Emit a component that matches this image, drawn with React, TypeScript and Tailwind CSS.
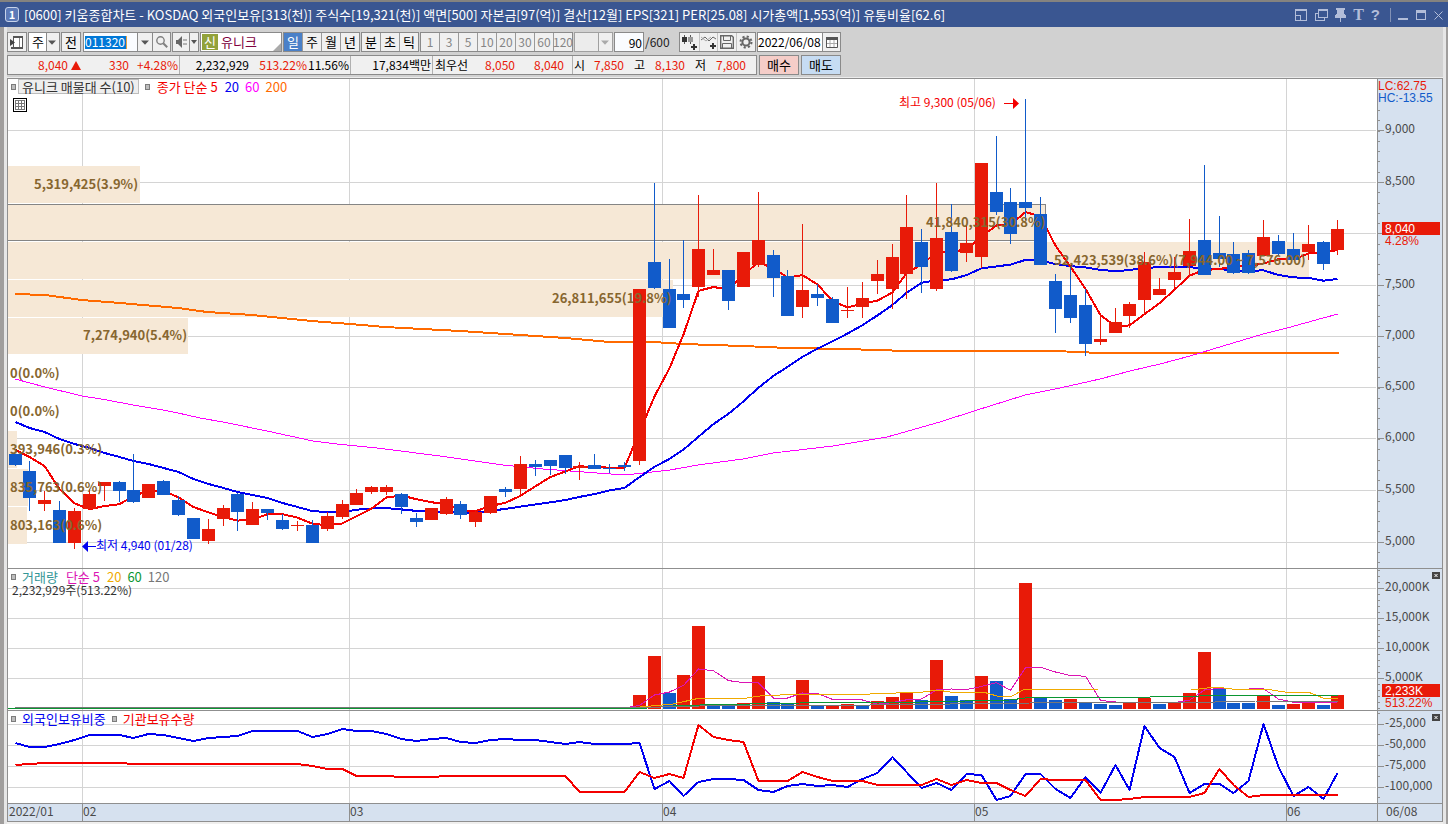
import type { ReactNode } from 'react';

type Candle = [top: number, bottom: number, high: number, low: number, up: 0 | 1];

const RED = '#e81a08';
const BLUE = '#115bca';
const GRID = '#d4d4d4';
const FRAME = '#8f8f8f';
const AXIS_BG = '#d6e1ef';
const BAND = '#f6e8d6';
const BROWN = '#87662f';

const KR = "font-['Noto_Sans_CJK_KR',sans-serif]";
const AXIS_NOTE = "font-['Liberation_Sans',sans-serif]";

/* top, bottom, high, low (drawing units), rising flag */
const candles: Candle[] = [
  [454, 465, 454, 466, 0], [471, 498, 461, 511, 0], [500, 504, 491, 511, 1], [510, 543, 501, 543, 0],
  [511, 543, 508, 549, 1], [494, 509, 489, 509, 1], [482, 486, 482, 501, 1], [482, 491, 481, 502, 0],
  [490, 502, 454, 503, 0], [484, 498, 484, 498, 1], [481, 495, 480, 495, 0], [500, 515, 496, 516, 0],
  [518, 539, 518, 539, 0], [529, 541, 519, 544, 1], [508, 519, 505, 526, 1], [494, 512, 493, 531, 0],
  [509, 525, 502, 525, 1], [509, 513, 509, 520, 0], [520, 529, 514, 530, 0], [525, 526, 521, 531, 1],
  [525, 543, 520, 543, 0], [516, 529, 512, 531, 1], [504, 517, 500, 519, 1], [493, 505, 489, 505, 1],
  [487, 492, 486, 494, 1], [487, 492, 485, 495, 1], [494, 507, 493, 514, 0], [518, 522, 513, 527, 0],
  [508, 520, 508, 520, 1], [499, 514, 497, 515, 1], [504, 515, 501, 519, 0], [512, 522, 510, 527, 1],
  [496, 513, 496, 514, 1], [489, 492, 487, 497, 0], [464, 489, 456, 495, 1], [464, 467, 460, 476, 0],
  [460, 466, 460, 475, 0], [455, 468, 455, 474, 0], [466, 468, 462, 480, 1], [465, 469, 454, 469, 0],
  [468, 469, 464, 473, 0], [465, 467, 462, 471, 0], [289, 461, 289, 465, 1], [262, 288, 183, 289, 0],
  [289, 328, 259, 328, 0], [294, 300, 240, 308, 0], [249, 287, 195, 297, 1], [270, 275, 249, 275, 1],
  [270, 301, 270, 310, 0], [252, 287, 252, 287, 1], [240, 265, 192, 267, 1], [255, 278, 250, 297, 0],
  [276, 316, 270, 316, 0], [290, 307, 224, 318, 1], [294, 298, 284, 306, 0], [299, 323, 297, 323, 0],
  [310, 311, 287, 318, 1], [298, 307, 282, 318, 1], [274, 281, 260, 294, 1], [257, 289, 244, 309, 1],
  [227, 274, 195, 299, 1], [242, 267, 229, 293, 0], [238, 289, 183, 291, 1], [232, 271, 204, 272, 0],
  [243, 253, 225, 262, 1], [163, 257, 163, 268, 1], [192, 212, 136, 215, 0], [202, 234, 188, 244, 0],
  [202, 208, 99, 220, 0], [214, 265, 197, 265, 0], [281, 309, 274, 333, 0], [295, 318, 266, 323, 0],
  [305, 344, 289, 356, 0], [339, 342, 315, 345, 1], [322, 333, 308, 333, 1], [304, 316, 302, 328, 1],
  [262, 300, 252, 314, 1], [289, 295, 278, 295, 1], [272, 280, 257, 288, 1], [251, 266, 219, 277, 1],
  [240, 275, 165, 275, 0], [253, 259, 216, 267, 0], [254, 273, 242, 274, 0], [253, 273, 250, 274, 0],
  [237, 256, 220, 256, 1], [241, 254, 235, 256, 0], [249, 260, 233, 260, 0], [244, 252, 225, 260, 1],
  [242, 264, 241, 270, 0], [229, 250, 220, 255, 1],
];

/* top edge and direction of each volume bar from the 43rd session on */
const volumeFirst = 42;
const volumeTops = [
  695, 656, 693, 675, 626, 704, 705, 703, 676, 702, 704, 680, 705, 706, 704, 705, 701, 697, 692, 700,
  660, 696, 700, 676, 681, 699, 583, 697, 700, 699, 702, 704, 705, 703, 698, 704, 703, 693, 652, 689,
  703, 703, 696, 705, 704, 703, 705, 695,
];
const volumeRising = [
  1, 1, 0, 1, 1, 0, 0, 1, 1, 0, 0, 1, 0, 1, 1, 0, 1, 1, 1, 0, 1, 0, 0, 1,
  0, 0, 1, 0, 0, 1, 0, 0, 0, 1, 1, 0, 1, 1, 1, 0, 0, 0, 1, 0, 1, 1, 0, 1,
];

const foreign = [
  743, 747, 747, 744, 740, 735, 735, 735, 738, 734, 735, 738, 741, 738, 737, 736, 731, 731, 731, 731,
  737, 734, 729, 731, 731, 734, 739, 741, 739, 738, 742, 743, 740, 739, 740, 740, 742, 744, 742, 744,
  744, 744, 743, 789, 781, 796, 782, 779, 779, 780, 790, 792, 786, 784, 786, 785, 787, 779, 773, 757,
  772, 788, 783, 790, 774, 775, 800, 796, 774, 774, 789, 798, 777, 793, 765, 790, 726, 748, 757, 793,
  784, 784, 793, 781, 724, 767, 796, 787, 799, 773,
];
const institution = [
  765, 764, 763, 763, 763, 763, 763, 763, 764, 764, 764, 764, 764, 764, 764, 764, 764, 764, 764, 764,
  766, 769, 769, 776, 776, 776, 777, 777, 777, 776, 776, 776, 776, 776, 776, 776, 776, 776, 792, 792,
  792, 792, 772, 778, 774, 778, 725, 737, 740, 742, 781, 781, 781, 772, 777, 781, 781, 781, 785, 785,
  785, 785, 779, 785, 780, 783, 783, 790, 796, 779, 780, 780, 780, 800, 800, 799, 797, 797, 797, 797,
  793, 769, 785, 797, 795, 795, 795, 795, 795, 795,
];

const xAt = (i: number) => Math.floor(15 + 14.865 * i);
const closes = candles.map(([top, bottom, , , up]) => (up ? top : bottom));
const mean = (list: number[]) => list.reduce((a, b) => a + b, 0) / list.length;
const moving = (list: number[], n: number, seed: number[]) =>
  list.map((_, i) => (i < seed.length ? seed[i] : mean(list.slice(Math.max(0, i - n + 1), i + 1))));
const toPoints = (ys: number[], from = 0) => ys.map((y, i) => `${xAt(i + from) + 0.5},${y.toFixed(1)}`).join(' ');

const ma5 = moving(closes, 5, [450, 457, 466, 489]);
const ma20 = moving(closes, 20, [
  422, 428, 432, 439, 444, 448, 453, 457, 461, 464, 468, 472, 479, 484, 488, 492, 495, 498, 503, 507,
]);
const volumeAll = candles.map((_, i) => (i < volumeFirst ? 708 : volumeTops[i - volumeFirst]));
const vol5 = moving(volumeAll, 5, []);

const ma60 =
  '15,379 45,387 82,396 107,400 133,405 163,410 178,413 200,418 223,422 267,431 313,441 337,444 377,448 440,456 503,465 543,469 597,473 625,475 670,470 698,465 743,459 773,453 833,446 887,437 940,422 974,411 1025,395 1060,388 1100,379 1130,371 1160,364 1190,356 1233,343 1263,334 1287,328 1323,318 1338,314';
const ma200 =
  '15,294 45,295 82,300 120,303 178,308 207,312 252,315 312,321 350,324 385,327 460,331 520,335 565,338 610,342 653,342 683,344 743,346 788,348 845,349 907,351 1055,351 1100,353 1339,353';

const months: [number, string][] = [[82, '02'], [349, '03'], [662, '04'], [974, '05'], [1286, '06']];

const profile: [number, number, number][] = [
  [166, 37, 140], [204, 37, 1045], [242, 37, 1309], [280, 37, 673], [318, 36, 188],
  [431, 37, 17], [469, 37, 28], [507, 37, 27],
];
const profileLabels: [number, number, string][] = [
  [34, 189, '5,319,425(3.9%)'], [926, 227, '41,840,315(30.8%)'],
  [1054, 265, '52,423,539(38.6%)(7,944.00 ~ 7,576.00)'], [552, 303, '26,811,655(19.8%)'],
  [83, 340, '7,274,940(5.4%)'], [10, 378, '0(0.0%)'], [10, 416, '0(0.0%)'],
  [10, 454, '393,946(0.3%)'], [10, 492, '835,763(0.6%)'], [10, 530, '803,163(0.6%)'],
];

const priceTicks: [number, string][] = [
  [130, '9,000'], [182, '8,500'], [233, ''], [285, '7,500'], [336, '7,000'], [387, '6,500'],
  [438, '6,000'], [490, '5,500'], [542, '5,000'],
];
const volumeTicks: [number, string][] = [[588, '20,000K'], [618, '15,000K'], [648, '10,000K'], [678, '5,000K']];
const holdTicks: [number, string][] = [[724, '-25,000'], [745, '-50,000'], [766, '-75,000'], [787, '-100,000']];

function every(from: number, to: number, step: number) {
  const out: number[] = [];
  for (let y = from; y < to; y += step) out.push(Math.round(y));
  return out;
}

function Panel({ top, height, ticks, minor, label, notes, children }: {
  top: number; height: number; ticks: [number, string][]; minor: number[]; label: string; notes?: ReactNode; children: ReactNode;
}) {
  return (
    <svg viewBox={`7 ${top} 1436 ${height}`} className={`block h-auto w-full text-[12px] ${KR}`} role="img" aria-label={label}>
      <g shapeRendering="crispEdges">
        <rect x="7" y={top} width="1436" height={height} fill="#fff" />
        {ticks.map(([y]) => <rect key={y} x="8" y={y} width="1368" height="1" fill={GRID} />)}
        {months.map(([x]) => <rect key={x} x={x} y={top} width="1" height={height} fill={GRID} />)}
      </g>
      {children}
      <g shapeRendering="crispEdges">
        <rect x="1377" y={top} width="65" height={height} fill={AXIS_BG} />
        {minor.map((y) => <rect key={y} x="1378" y={y} width="2" height="1" fill={FRAME} />)}
        {ticks.map(([y]) => <rect key={y} x="1378" y={y} width="6" height="1" fill={FRAME} />)}
        <rect x="7" y={top} width="1436" height="1" fill={FRAME} />
        <rect x="7" y={top} width="1" height={height} fill={FRAME} />
        <rect x="1377" y={top} width="1" height={height} fill={FRAME} />
        <rect x="1442" y={top} width="1" height={height} fill={FRAME} />
      </g>
      {ticks.map(([y, t]) => t && <text key={y} x="1385" y={y + 3} fill="#4a4a4a">{t}</text>)}
      {notes}
    </svg>
  );
}

function Tag({ y, value, percent }: { y: number; value: string; percent: string }) {
  return (
    <g className={AXIS_NOTE}>
      <rect x="1382" y={y} width="58" height="13" fill={RED} shapeRendering="crispEdges" />
      <text x="1385" y={y + 11} fill="#fff">{value}</text>
      <text x="1385" y={y + 23} fill={RED}>{percent}</text>
    </g>
  );
}

const Dot = () => <span className="h-[6px] w-[5px] border border-[#7c7c7c] bg-[#bdbdbd]" />;

function Close({ label }: { label: string }) {
  return (
    <button aria-label={label} className="absolute right-[3px] top-1 flex h-[7px] w-2 items-center justify-center bg-[#444]">
      <svg viewBox="0 0 8 7" className="h-[7px] w-2"><path d="M2.5 2l3 3M5.5 2l-3 3" stroke="#fff" strokeWidth="1" /></svg>
    </button>
  );
}

const Caret = ({ dim = false }: { dim?: boolean }) => (
  <svg viewBox="0 0 8 5" className="h-[5px] w-2"><path d="M0 .5h8L4 4.8z" fill={dim ? '#aaa' : '#555'} /></svg>
);

const box = 'flex h-5 items-center justify-center border border-[#8a8a8a]';

function Group({ items, active, dim, label }: { items: string[]; active?: string; dim?: boolean; label: string }) {
  return (
    <div role="group" aria-label={label} className={`flex h-5 border border-[#8a8a8a] ${dim ? '' : 'text-[13px]'}`}>
      {items.map((t, i) => (
        <button
          key={t}
          className={`flex h-full items-center justify-center whitespace-nowrap ${i ? 'w-[19px] border-l border-[#9a9a9a]' : 'w-[18px]'} ${t === active ? 'bg-[#4a80c8] text-white' : 'bg-[#f0f0f0]'} ${dim ? 'text-[#858585]' : ''}`}
        >
          {t}
        </button>
      ))}
    </div>
  );
}

function TitleBar() {
  return (
    <header className="flex h-[27px] items-center border-t-2 border-[#85837f] bg-[#3a5691] pl-[5px] pr-[5px] text-white">
      <span className="flex h-[15px] w-[14px] items-center justify-center rounded-[3px] border border-[#c7d3ea] bg-[#5c7ab8] text-[11px] font-bold leading-none">1</span>
      <h1 className="min-w-0 flex-1 truncate pl-[5px] text-[13px] font-normal">
        [0600] 키움종합차트 - KOSDAQ 외국인보유[313(천)] 주식수[19,321(천)] 액면[500] 자본금[97(억)] 결산[12월] EPS[321] PER[25.08] 시가총액[1,553(억)] 유통비율[62.6]
      </h1>
      <div className="flex items-center text-[#b2bdd9]">
        <button aria-label="화면 축소" className="mr-2"><svg viewBox="0 0 12 12" className="h-3 w-3" fill="none" stroke="currentColor" shapeRendering="crispEdges"><path d="M.5 1v10.500h11V1M1 6.500h4.500v5" /><path d="M0 1h12" strokeWidth="2" /></svg></button>
        <button aria-label="창 복제" className="mr-[7px]"><svg viewBox="0 0 13 12" className="h-3 w-[13px]" fill="none" stroke="currentColor" shapeRendering="crispEdges"><path d="M3.500 1.500h9v7h-9zM3 4.500H.5v7h9V9" /><path d="M3 1h10" strokeWidth="2" /></svg></button>
        <button aria-label="고정" className="mr-[7px]"><svg viewBox="0 0 11 14" className="h-[14px] w-[11px]" fill="currentColor" shapeRendering="crispEdges"><path d="M1 0h9v2H9v4h1v1h1v3H6v4H5v-4H0V7h1V6h1V2H1z" /></svg></button>
        <button aria-label="글꼴" className="mr-[7px] font-['Liberation_Serif',serif] text-[16px] font-bold leading-none">T</button>
        <button aria-label="도움말" className="mr-[10px] font-['Liberation_Sans',sans-serif] text-[15px] font-bold leading-none">?</button>
        <span className="mr-[7px] h-[14px] w-px bg-[#8291b5]" />
        <button aria-label="최소화" className="mr-2"><svg viewBox="0 0 10 12" className="h-3 w-[10px]"><path d="M0 10h10" stroke="currentColor" strokeWidth="2" /></svg></button>
        <button aria-label="최대화" className="mr-2"><svg viewBox="0 0 10 12" className="h-3 w-[10px]" fill="none" stroke="currentColor" shapeRendering="crispEdges"><path d="M.5 2v8.500h9V2" /><path d="M0 2.500h10" strokeWidth="3" /></svg></button>
        <button aria-label="닫기"><svg viewBox="0 0 9 12" className="h-3 w-[9px]"><path d="M.5 2.500l8 8m0-8l-8 8" stroke="currentColor" /></svg></button>
      </div>
    </header>
  );
}

function Toolbar() {
  return (
    <div className="flex h-5 items-center gap-px">
      <button aria-label="패널 열기" className={`${box} w-5 bg-[#f0f0f0]`}>
        <svg viewBox="0 0 14 14" className="h-[14px] w-[14px]"><path d="M3.500 1.500h9v11h-9z" fill="#fff" stroke="#555" /><path d="M3 2h10M1 13h12" stroke="#555" strokeWidth="2" fill="none" /><path d="M9.500 3v9" stroke="#888" /><path d="M0 4l5 3.500L0 11z" fill="#444" /></svg>
      </button>
      <div className="relative flex h-5 w-8 items-center border border-[#8a8a8a] bg-[#f0f0f0]">
        <select aria-label="종목 구분" className="h-full w-full appearance-none bg-[linear-gradient(to_right,#fff_17px,#8a8a8a_17px,#8a8a8a_18px,#f0f0f0_18px)] pl-[3px] text-[13px]"><option>주</option></select>
        <span className="pointer-events-none absolute right-[3px]"><Caret /></span>
      </div>
      <button className={`${box} w-5 bg-[#f0f0f0] text-[13px]`}>전</button>
      <div className="ml-px flex h-5 w-[88px] border border-[#8a8a8a] bg-white">
        <div className="flex w-[54px] items-center bg-[#fafcff] pl-px">
          <input aria-label="종목 코드" defaultValue="011320" className="h-[13px] w-[42px] border-r border-[#e8a040] bg-[#0078d7] text-white" />
        </div>
        <button aria-label="종목 목록" className="flex w-[15px] items-center justify-center border-l border-[#8a8a8a] bg-[#f0f0f0]"><Caret /></button>
        <button aria-label="종목 검색" className="flex w-[18px] items-center justify-center border-l border-[#8a8a8a] bg-[#f0f0f0]">
          <svg viewBox="0 0 12 12" className="h-3 w-3" fill="none" stroke="#808080"><circle cx="4.500" cy="4.500" r="3.700" strokeWidth="1.400" /><path d="M7.200 7.200l4 4" strokeWidth="2" /></svg>
        </button>
      </div>
      <div className="flex h-5 w-[27px] border border-[#8a8a8a] bg-[#f0f0f0]">
        <button aria-label="소리" className="flex w-4 items-center justify-center">
          <svg viewBox="0 0 13 12" className="h-3 w-[13px]"><path d="M1 4h2l4-4v12L3 8H1z" fill="#666" /><path d="M9 3v2M9 7v2M11 3v2M11 7v2" stroke="#777" /></svg>
        </button>
        <button aria-label="소리 설정" className="flex w-[9px] items-center justify-center border-l border-[#8a8a8a]"><svg viewBox="0 0 6 4" className="h-1 w-[6px]"><path d="M0 0h6L3 4z" fill="#555" /></svg></button>
      </div>
      <div className="relative flex h-5 w-[82px] items-center border border-[#8a8a8a] bg-white pl-px">
        <span className="flex h-4 w-4 items-center justify-center bg-[#92a23a] text-[13px] text-white">신</span>
        <span className="pl-[3px] text-[13px] text-[#800040]">유니크</span>
        <svg viewBox="0 0 8 8" className="absolute bottom-0 right-0 h-2 w-2"><path d="M8 0v8H0z" fill="#aaa" /></svg>
      </div>
      <Group label="주기" items={['일', '주', '월', '년']} active="일" />
      <Group label="분초틱" items={['분', '초', '틱']} />
      <Group label="간격" items={['1', '3', '5', '10', '20', '30', '60', '120']} dim />
      <div className="relative flex h-5 w-[39px] items-center border border-[#a0a0a0]">
        <select aria-label="사용자 간격" className="h-full w-full appearance-none bg-[linear-gradient(to_right,#ececec_23px,#a0a0a0_23px,#a0a0a0_24px,#f0f0f0_24px)]"><option></option></select>
        <span className="pointer-events-none absolute right-[3px]"><Caret dim /></span>
      </div>
      <input aria-label="표시 개수" defaultValue="90" className="h-5 w-[30px] border border-[#8a8a8a] bg-[#fafcff] pr-px text-right" />
      <span className="w-[33px] text-[#222]">/600</span>
      <div className="flex h-5 w-[77px] border border-[#8a8a8a] bg-[#f0f0f0]">
        <button aria-label="캔들 추가" className="flex w-[19px] items-center justify-center"><svg viewBox="0 0 16 15" className="h-[15px] w-4"><path d="M3.500 0v9M9.500 0v9" stroke="#555" /><path d="M1 2h5v5H1z" fill="#333" /><path d="M7 2h5v5H7z" fill="#999" /><path d="M13 9v6M10 12h6" stroke="#333" strokeWidth="2" /></svg></button>
        <button aria-label="지표 추가" className="flex w-[19px] items-center justify-center border-l border-[#c4c4c4]"><svg viewBox="0 0 16 15" className="h-[15px] w-4" fill="none"><path d="M0 5l4-3 4 4 4-4 3 2" stroke="#666" /><path d="M0 2l5 4 5-4" stroke="#aaa" /><path d="M12 8v6M9 11h6" stroke="#333" strokeWidth="2" /></svg></button>
        <button aria-label="저장" className="flex w-[19px] items-center justify-center border-l border-[#c4c4c4]"><svg viewBox="0 0 14 14" className="h-[14px] w-[14px]" fill="none" stroke="#666"><path d="M.7.7h11l1.600 1.600v11H.7z" strokeWidth="1.400" /><path d="M3.500 1v4.500h7V1M2.500 13V8.500h9V13" /></svg></button>
        <button aria-label="설정" className="flex w-[19px] items-center justify-center border-l border-[#c4c4c4]"><svg viewBox="0 0 14 14" className="h-[14px] w-[14px]" fill="none" stroke="#666"><circle cx="7" cy="7" r="3.600" strokeWidth="2" /><circle cx="7" cy="7" r="5.500" strokeWidth="2" strokeDasharray="2.160 2.160" /></svg></button>
      </div>
      <div className="flex h-5 w-[84px] border border-[#8a8a8a] bg-white">
        <input aria-label="기준일" defaultValue="2022/06/08" className="w-[64px] bg-white" />
        <button aria-label="달력" className="flex w-[18px] items-center justify-center border-l border-[#8a8a8a] bg-[#f0f0f0]"><svg viewBox="0 0 12 12" className="h-3 w-3" fill="none" stroke="#555"><path d="M.5 2h11v9.500H.5z" fill="#fff" /><path d="M0 2.500h12" strokeWidth="3" /><path d="M4 4v7M8 4v7M1 7.500h10" stroke="#aaa" /></svg></button>
      </div>
    </div>
  );
}

function Quote() {
  const r = 'text-right text-[#e81a08]';
  const sep = 'h-[18px] border-l border-[#b0b0b0] leading-[18px]';
  return (
    <div className="flex h-5 items-center gap-[2px]">
      <div className="flex h-5 w-[750px] items-center whitespace-nowrap border border-[#8a8a8a] bg-[#f0f0f0]">
        <span className={`${r} w-[60px]`}>8,040</span>
        <svg viewBox="0 0 10 9" className="ml-[3px] h-[9px] w-[10px]"><path d="M5 0l5 9H0z" fill={RED} /></svg>
        <span className={`${r} w-[48px]`}>330</span>
        <span className={`${r} w-[50px] pr-px`}>+4.28%</span>
        <span className={`${sep} w-[70px] text-right`}>2,232,929</span>
        <span className={`${r} w-[58px]`}>513.22%</span>
        <span className="w-[43px] pr-px text-right">11.56%</span>
        <span className={`${sep} w-[82px] pr-px text-right`}>17,834백만</span>
        <span className={`${sep} w-[40px] pl-[2px]`}>최우선</span>
        <span className={`${r} w-[43px]`}>8,050</span>
        <span className={`${r} w-[49px]`}>8,040</span>
        <span className={`${sep} ml-2 w-4 pl-px`}>시</span>
        <span className={`${r} w-[36px]`}>7,850</span>
        <span className="w-[21px] text-right">고</span>
        <span className={`${r} w-[40px]`}>8,130</span>
        <span className="w-[21px] text-right">저</span>
        <span className={`${r} w-[40px]`}>7,800</span>
      </div>
      <button className="h-5 w-10 border border-[#8a8a8a] bg-[#f5cdc8] text-[13px]">매수</button>
      <button className="h-5 w-10 border border-[#8a8a8a] bg-[#c6dcf3] text-[13px]">매도</button>
    </div>
  );
}

function PricePanel() {
  return (
    <section className="relative">
      <Panel
        top={78}
        height={490}
        ticks={priceTicks}
        minor={every(110, 566, 10.28)}
        label="일봉 차트"
        notes={
          <>
            <g className={AXIS_NOTE}>
              <text x="1378" y="90" fill={RED}>LC:62.75</text>
              <text x="1378" y="102" fill={BLUE}>HC:-13.55</text>
            </g>
            <Tag y={222} value="8,040" percent="4.28%" />
          </>
        }
      >
        <g shapeRendering="crispEdges">
          {profile.map(([y, h, x]) => <rect key={y} x="8" y={y} width={x - 8} height={h} fill={BAND} />)}
          <path d="M8 204.500H1045.500V240.500H8" fill="none" stroke="#858585" />
        </g>
        <g fill="none" strokeLinejoin="round" shapeRendering="crispEdges">
          <polyline points={ma200} stroke="#ff6a00" strokeWidth="2" />
          <polyline points={ma60} stroke="#ff00ff" />
          <polyline points={toPoints(ma20)} stroke="#0000f0" strokeWidth="2" />
          <polyline points={toPoints(ma5)} stroke="#f40000" strokeWidth="2" />
        </g>
        <g shapeRendering="crispEdges">
          {candles.map(([top, bottom, high, low, up], i) => (
            <g key={i} fill={up ? RED : BLUE}>
              <rect x={xAt(i)} y={high} width="1" height={low - high} />
              <rect x={xAt(i) - 6} y={top} width="13" height={bottom - top} />
            </g>
          ))}
        </g>
        <g fill={BROWN} className="text-[13px] font-bold">
          {profileLabels.map(([x, y, t]) => <text key={y} x={x} y={y}>{t}</text>)}
        </g>
        <text x="899" y="107" fill="#f40000">최고 9,300 (05/06)</text>
        <path d="M1004 103h9v-5l6 5.500-6 5.500v-5h-9z" fill="#f40000" />
        <text x="96" y="550" fill="#0000f0">최저 4,940 (01/28)</text>
        <path d="M96 546h-8v-5l-6 5.500 6 5.500v-5h8z" fill="#0000f0" />
      </Panel>
      <div className="absolute left-1 top-px flex h-[15px] items-center whitespace-nowrap text-[13px]">
        <Dot />
        <span className="ml-[2px] flex h-[15px] items-center border border-[#bdbdbd] bg-[#eeeeee] px-[3px] text-[#333]">유니크 매물대 수(10)</span>
        <span className="ml-[6px] flex"><Dot /></span>
        <span className="ml-[7px] text-[#f40000]">종가 단순 5</span>
        <span className="ml-[7px] text-[#0000f0]">20</span>
        <span className="ml-[6px] text-[#ff00ff]">60</span>
        <span className="ml-[6px] text-[#ff6a00]">200</span>
      </div>
      <button aria-label="데이터 표" className="absolute left-[6px] top-5 flex h-[14px] w-[14px] items-center justify-center border border-black bg-white">
        <svg viewBox="0 0 10 10" className="h-[10px] w-[10px]" fill="none" stroke="#777" shapeRendering="crispEdges"><path d="M.5.5h9v9h-9zM3.500 0v10M6.500 0v10M0 3.500h10M0 6.500h10" /></svg>
      </button>
    </section>
  );
}

function VolumePanel() {
  return (
    <section className="relative">
      <Panel
        top={568}
        height={142}
        ticks={volumeTicks}
        minor={every(570, 709, 6)}
        label="거래량"
        notes={<Tag y={684} value="2,233K" percent="513.22%" />}
      >
        <g shapeRendering="crispEdges">
          {volumeTops.map((y, i) => (
            <rect key={i} x={xAt(i + volumeFirst) - 6} y={y} width="13" height={709 - y} fill={volumeRising[i] ? RED : BLUE} />
          ))}
        </g>
        <g fill="none" shapeRendering="crispEdges">
          <polyline points={toPoints(vol5.slice(41), 41)} stroke="#dc14b4" />
          <polyline points="640,707 673,704 700,698 747,698 760,696 800,694 870,694 923,692 937,690 950,692 983,692 997,696 1012,696 1025,689 1048,689 1098,690 1191,690 1215,687 1241,690 1265,689 1285,692 1308,692 1323,698 1338,698" stroke="#f0aa00" />
          <polyline points="8,708.5 640,708.5 673,706 700,705 800,703 920,702 1010,700 1025,698 1150,697 1200,696 1215,695 1338,695" stroke="#0a9632" />
          <polyline points="15,707.5 640,707.5 700,706 870,705 1030,703 1215,702 1256,701 1338,701" stroke="#777" />
        </g>
      </Panel>
      <div className="absolute left-1 top-[3px] flex h-3 items-center whitespace-nowrap text-[13px]">
        <Dot />
        <span className="ml-[6px] text-[#329696]">거래량</span>
        <span className="ml-2 text-[#dc14b4]">단순 5</span>
        <span className="ml-[7px] text-[#f0aa00]">20</span>
        <span className="ml-[6px] text-[#0a9632]">60</span>
        <span className="ml-[6px] text-[#777]">120</span>
      </div>
      <p className="absolute left-[5px] top-4 leading-3 text-[#333]">2,232,929주(513.22%)</p>
      <Close label="거래량 닫기" />
    </section>
  );
}

function HoldingPanel() {
  return (
    <section className="relative">
      <Panel top={710} height={93} ticks={holdTicks} minor={[713, 734, 755, 776, 797]} label="외국인 및 기관 보유">
        <g fill="none" strokeWidth="2" strokeLinejoin="round" shapeRendering="crispEdges">
          <polyline points={toPoints(foreign)} stroke="#0000f0" />
          <polyline points={toPoints(institution)} stroke="#f40000" />
        </g>
      </Panel>
      <div className="absolute left-1 top-[3px] flex h-3 items-center whitespace-nowrap text-[13px]">
        <Dot />
        <span className="ml-[6px] text-[#0000f0]">외국인보유비중</span>
        <span className="ml-[6px] flex"><Dot /></span>
        <span className="ml-[6px] text-[#f40000]">기관보유수량</span>
      </div>
      <Close label="보유 차트 닫기" />
    </section>
  );
}

function DateAxis() {
  return (
    <svg viewBox="7 803 1436 19" className={`block h-auto w-full text-[12px] ${KR}`} role="img" aria-label="날짜 축">
      <g shapeRendering="crispEdges" stroke={FRAME}>
        <rect x="7.5" y="803.5" width="1435" height="18" fill={AXIS_BG} />
        {months.map(([x]) => <path key={x} d={`M${x}.5 803V821`} />)}
        <path d="M1377.500 803V821" />
      </g>
      <g fill="#4a4a4a">
        <text x="9" y="816">2022/01</text>
        {months.map(([x, t]) => <text key={x} x={x + 1} y="816">{t}</text>)}
        <text x="1386" y="816">06/08</text>
      </g>
    </svg>
  );
}

export default function App() {
  return (
    <div className={`min-h-screen bg-[#ececec] text-[12px] leading-4 text-black ${KR}`}>
      <TitleBar />
      <div className="border-l-4 border-r-2 border-[#a09e9d]">
        <div className="border-l-[3px] border-r-[3px] border-[#e6e6e6] bg-[#d1d1d1]">
          <div className="flex flex-col gap-[3px] pb-[2px] pt-[5px]">
            <Toolbar />
            <Quote />
          </div>
          <div className="h-px bg-[#ececec]" />
          <main>
            <PricePanel />
            <VolumePanel />
            <HoldingPanel />
            <DateAxis />
          </main>
          <div className="h-[2px] bg-[#f0efee]" />
        </div>
      </div>
    </div>
  );
}
